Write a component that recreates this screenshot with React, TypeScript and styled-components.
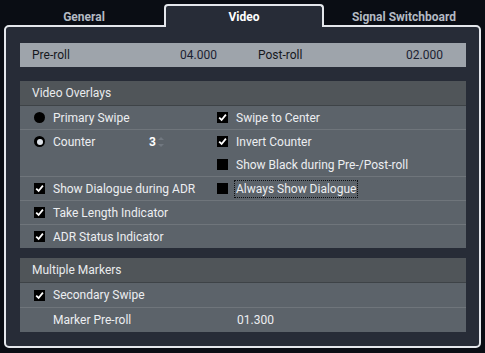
import React from 'react';
import styled, { createGlobalStyle, css } from 'styled-components';

const FONT = `Roboto, "Noto Sans", "DejaVu Sans", sans-serif`;

const Global = createGlobalStyle`
  html, body { margin: 0; padding: 0; background: #0a0d14; }
  body { font-family: ${FONT}; }
`;

const Window = styled.div`
  width: 485px;
  height: 353px;
  box-sizing: border-box;
  background: #0a0d14;
  display: flex;
  flex-direction: column;
  font-family: ${FONT};
  font-size: 12px;
  color: #eceef1;
  overflow: hidden;
`;

const TabBar = styled.div`
  height: 25px;
  flex: none;
  display: flex;
  align-items: flex-end;
  padding: 0 1px 0 4px;
`;

const Tab = styled.div<{ $active?: boolean }>`
  flex: 1;
  height: 23px;
  margin-bottom: -2px;
  box-sizing: border-box;
  border: 2px solid transparent;
  border-bottom: none;
  display: flex;
  align-items: center;
  justify-content: center;
  font-weight: 700;
  font-size: 12px;
  color: #b4bac3;
  ${(p) =>
    p.$active &&
    css`
      position: relative;
      z-index: 1;
      color: #ffffff;
      background: #272c37;
      border-color: #e4e7ec;
      border-radius: 4px 4px 0 0;
    `}
`;

const Panel = styled.div`
  flex: 1;
  margin: 0 4px 5px 4px;
  border: 2px solid #e4e7ec;
  border-radius: 5px;
  background: #272c37;
  padding: 16px 13px 0 14px;
  display: flex;
  flex-direction: column;
`;

const RollBar = styled.div`
  height: 24px;
  background: #9ea4ab;
  display: grid;
  grid-template-columns: 1fr 1fr;
  margin-bottom: 14px;
`;

const RollHalf = styled.div<{ $pl: number; $pr: number }>`
  display: flex;
  align-items: center;
  justify-content: space-between;
  padding: 0 ${(p) => p.$pr}px 0 ${(p) => p.$pl}px;
`;

const RollLabel = styled.span`
  color: #15181d;
`;

const RollValue = styled.span`
  color: #1c2232;
`;

const Section = styled.div<{ $rowH: number }>`
  --row-h: ${(p) => p.$rowH}px;
  background: #5c636a;
  margin-bottom: 10px;
`;

const SectionHeader = styled.div`
  height: 24px;
  background: #505559;
  display: flex;
  align-items: center;
  padding-left: 12px;
  color: #e9ebed;
`;

const Row = styled.div<{ $first?: boolean }>`
  display: grid;
  grid-template-columns: 183px 1fr;
  border-top: 1px solid ${(p) => (p.$first ? '#3e4347' : '#6f757b')};
`;

const Cell = styled.div`
  display: flex;
  flex-direction: column;
`;

const Item = styled.div<{ $pl?: number }>`
  height: var(--row-h);
  display: flex;
  align-items: center;
  gap: 8px;
  padding-left: ${(p) => p.$pl ?? 14}px;
  white-space: nowrap;
`;

const Box = styled.span`
  width: 11px;
  height: 11px;
  background: #000;
  flex: none;
  display: flex;
  align-items: center;
  justify-content: center;
`;

const Radio = styled.span<{ $on?: boolean }>`
  width: 11px;
  height: 11px;
  border-radius: 50%;
  background: #000;
  flex: none;
  display: flex;
  align-items: center;
  justify-content: center;
  &::after {
    content: '';
    width: 6px;
    height: 6px;
    border-radius: 50%;
    background: ${(p) => (p.$on ? '#dde2e8' : 'transparent')};
  }
`;

const FocusLabel = styled.span`
  border: 1px dotted #0d0f12;
  padding: 0 1px;
  line-height: 16px;
  margin-left: -2px;
`;

const NumberField = styled.span`
  margin-left: auto;
  margin-right: 39px;
  display: flex;
  align-items: center;
  gap: 2px;
  font-weight: 700;
  color: #ffffff;
`;

const Spin = styled.svg`
  display: block;
`;

const Check = () => (
  <Box>
    <svg width="9" height="9" viewBox="0 0 9 9">
      <path d="M1.2 4.6 L3.6 7 L7.9 1.6" fill="none" stroke="#fff" strokeWidth="1.8" />
    </svg>
  </Box>
);

const Empty = () => <Box />;

export default function App() {
  return (
    <Window>
      <Global />
      <TabBar>
        <Tab>General</Tab>
        <Tab $active>Video</Tab>
        <Tab>Signal Switchboard</Tab>
      </TabBar>
      <Panel>
        <RollBar>
          <RollHalf $pl={12} $pr={26}>
            <RollLabel>Pre-roll</RollLabel>
            <RollValue>04.000</RollValue>
          </RollHalf>
          <RollHalf $pl={15} $pr={23}>
            <RollLabel>Post-roll</RollLabel>
            <RollValue>02.000</RollValue>
          </RollHalf>
        </RollBar>

        <Section $rowH={23}>
          <SectionHeader>Video Overlays</SectionHeader>
          <Row $first>
            <Cell>
              <Item>
                <Radio />
                Primary Swipe
              </Item>
            </Cell>
            <Cell>
              <Item>
                <Check />
                Swipe to Center
              </Item>
            </Cell>
          </Row>
          <Row>
            <Cell>
              <Item>
                <Radio $on />
                Counter
                <NumberField>
                  3
                  <Spin width="6" height="12" viewBox="0 0 6 12">
                    <path d="M0 4 L3 1 L6 4 Z" fill="#717880" />
                    <path d="M0 8 L3 11 L6 8 Z" fill="#717880" />
                  </Spin>
                </NumberField>
              </Item>
            </Cell>
            <Cell>
              <Item>
                <Check />
                Invert Counter
              </Item>
              <Item>
                <Empty />
                Show Black during Pre-/Post-roll
              </Item>
            </Cell>
          </Row>
          <Row>
            <Cell>
              <Item>
                <Check />
                Show Dialogue during ADR
              </Item>
            </Cell>
            <Cell>
              <Item>
                <Empty />
                <FocusLabel>Always Show Dialogue</FocusLabel>
              </Item>
            </Cell>
          </Row>
          <Row>
            <Cell>
              <Item>
                <Check />
                Take Length Indicator
              </Item>
            </Cell>
          </Row>
          <Row>
            <Cell>
              <Item>
                <Check />
                ADR Status Indicator
              </Item>
            </Cell>
          </Row>
        </Section>

        <Section $rowH={24}>
          <SectionHeader>Multiple Markers</SectionHeader>
          <Row $first>
            <Cell>
              <Item>
                <Check />
                Secondary Swipe
              </Item>
            </Cell>
          </Row>
          <Row>
            <Cell>
              <Item $pl={33}>Marker Pre-roll</Item>
            </Cell>
            <Cell>
              <Item $pl={34}>01.300</Item>
            </Cell>
          </Row>
        </Section>
      </Panel>
    </Window>
  );
}
